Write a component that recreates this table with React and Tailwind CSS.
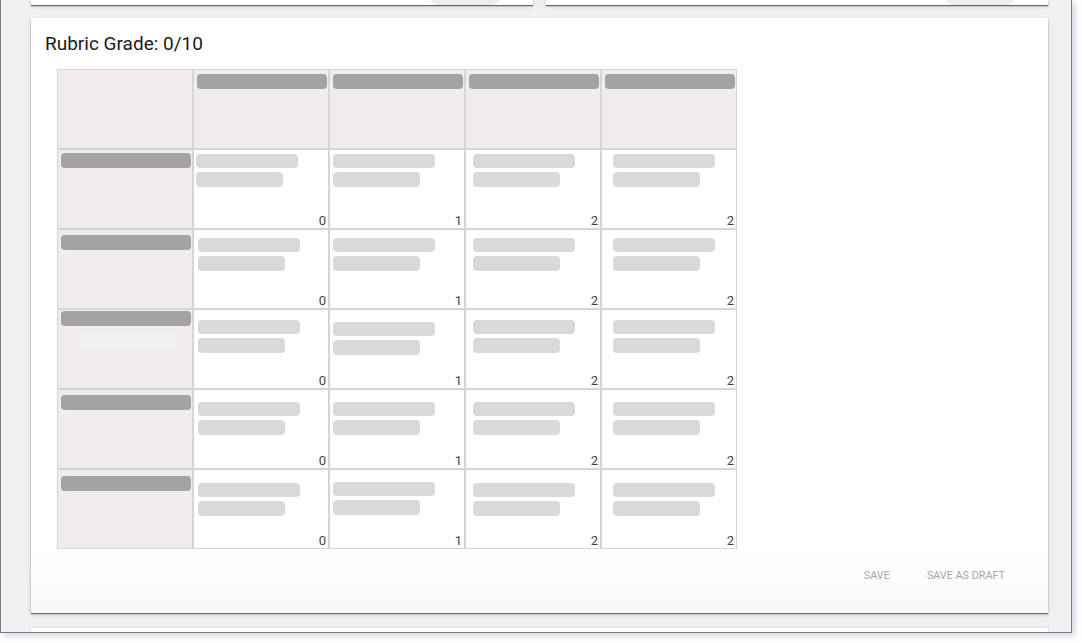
import React from "react";

const rowsData = [
  { head: { pt: 3 }, cells: [
    { pl: 2, pt: 4, n: 0 }, { pl: 3, pt: 4, n: 1 }, { pl: 7, pt: 4, n: 2 }, { pl: 11, pt: 4, n: 2 },
  ] },
  { head: { pt: 5 }, cells: [
    { pl: 4, pt: 8, n: 0 }, { pl: 3, pt: 8, n: 1 }, { pl: 7, pt: 8, n: 2 }, { pl: 11, pt: 8, n: 2 },
  ] },
  { head: { pt: 1, faint: true }, cells: [
    { pl: 4, pt: 10, n: 0 }, { pl: 3, pt: 12, n: 1 }, { pl: 7, pt: 10, n: 2 }, { pl: 11, pt: 10, n: 2 },
  ] },
  { head: { pt: 5 }, cells: [
    { pl: 4, pt: 12, n: 0 }, { pl: 3, pt: 12, n: 1 }, { pl: 7, pt: 12, n: 2 }, { pl: 11, pt: 12, n: 2 },
  ] },
  { head: { pt: 6 }, cells: [
    { pl: 4, pt: 13, n: 0 }, { pl: 3, pt: 12, n: 1 }, { pl: 7, pt: 13, n: 2 }, { pl: 11, pt: 13, n: 2 },
  ] },
];

function HeaderCell() {
  return (
    <div className="border border-[#d5d5d5] bg-[#efeceb] pt-[4px] pl-[3px] pr-[1px]">
      <div className="h-[15px] rounded-[4px] bg-[#a3a3a3]" />
    </div>
  );
}

function RowHead({ pt, faint }) {
  return (
    <div className="border border-[#d5d5d5] bg-[#efeceb] pl-[3px] pr-[1px]" style={{ paddingTop: pt }}>
      <div className="h-[15px] rounded-[4px] bg-[#a3a3a3]" />
      {faint && <div className="ml-[18px] mt-[7px] h-[15px] w-[97px] rounded-[3px] bg-[#f3f1f0]" />}
    </div>
  );
}

function Cell({ pl, pt, n }) {
  return (
    <div className="flex flex-col border border-[#d5d5d5] bg-white pr-[2px]" style={{ paddingLeft: pl, paddingTop: pt }}>
      <div className="h-[14px] w-[102px] rounded-[4px] bg-[#d9d9d9]" />
      <div className="mt-[4px] h-[15px] w-[87px] rounded-[4px] bg-[#d9d9d9]" />
      <div className="mt-auto text-right text-[13px] leading-[15px] text-[#444444]">{n}</div>
    </div>
  );
}

function TopCard() {
  return (
    <div className="relative h-[5px] flex-1 overflow-hidden bg-white shadow-[0_1px_1px_rgba(0,0,0,0.55),0_2px_4px_rgba(0,0,0,0.12)]">
      <div className="absolute right-[30px] top-[-30px] h-[38px] w-[76px] rounded-full bg-[#ececee]" />
    </div>
  );
}

export default function App() {
  return (
    <div className="h-[643px] w-[1082px] overflow-hidden bg-white font-['Roboto',sans-serif]">
      <div className="h-[633px] w-[1072px] overflow-hidden border-b border-l border-r border-[#7b7b7b] bg-[#eff0f2] pl-[30px] pr-[23px] shadow-[3px_3px_6px_rgba(120,140,170,0.35)]">
        <div className="flex gap-[13px]">
          <TopCard />
          <TopCard />
        </div>
        <div className="mt-[13px] flex h-[595px] flex-col bg-gradient-to-b from-white from-[90%] to-[#f8f8f8] shadow-[0_1px_1px_rgba(0,0,0,0.5),0_2px_5px_rgba(0,0,0,0.15)]">
          <div className="pl-[14px] pt-[14px] text-[19px] leading-[24px] text-[#1a1a1a]">Rubric Grade: 0/10</div>
          <div className="ml-[26px] mt-[13px] grid w-[680px] grid-cols-[repeat(5,136px)] grid-rows-[repeat(6,80px)]">
            <div className="border border-[#d5d5d5] bg-[#efeceb]" />
            <HeaderCell />
            <HeaderCell />
            <HeaderCell />
            <HeaderCell />
            {rowsData.map((r, i) => (
              <React.Fragment key={i}>
                <RowHead pt={r.head.pt} faint={r.head.faint} />
                {r.cells.map((c, j) => (
                  <Cell key={j} {...c} />
                ))}
              </React.Fragment>
            ))}
          </div>
          <div className="mt-[19px] flex justify-end gap-[37px] pr-[43px] text-[10.8px] leading-[16px] text-[#a6a6a6]">
            <span>SAVE</span>
            <span>SAVE AS DRAFT</span>
          </div>
        </div>
        <div className="mt-[15px] h-[20px] bg-white shadow-[0_0_2px_rgba(0,0,0,0.2)]" />
      </div>
    </div>
  );
}
